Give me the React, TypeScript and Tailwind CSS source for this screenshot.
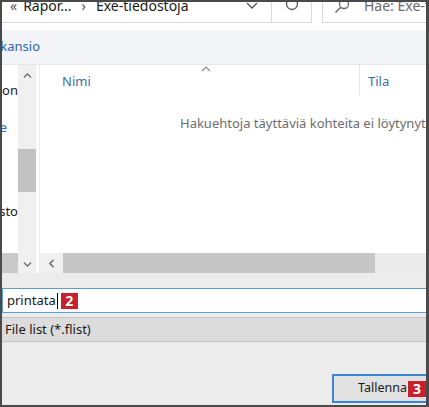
import { ChevronDown, ChevronLeft, ChevronUp } from "lucide-react";

const font = { fontFamily: '"Segoe UI", "Noto Sans", "Liberation Sans", sans-serif' };

function Badge({ label, className }: { label: string; className?: string }) {
  return (
    <span
      className={`flex items-center justify-center bg-[#c9202e] text-[14px] font-bold leading-none text-white ${className ?? ""}`}
    >
      {label}
    </span>
  );
}

function AddressBar() {
  return (
    <div className="flex h-[21px] shrink-0 bg-white">
      <div className="flex w-[310px] shrink-0 items-start whitespace-nowrap border-b border-r border-[#d9d9d9] text-[14px] leading-none text-[#1a1a1a]">
        <span className="-mt-[3px] ml-[8px] text-[#555]">«</span>
        <span className="-mt-[3px] ml-[6px]">Rapor...</span>
        <span className="-mt-[3px] ml-[10px] text-[#555]">›</span>
        <span className="-mt-[3px] ml-[10px]">Exe-tiedostoja</span>
        <div className="ml-auto flex h-full w-[40px] items-start justify-center border-r border-[#d9d9d9]">
          <svg width="14" height="10" viewBox="0 0 14 10" className="-mt-[1px]">
            <path d="M2 2 L7 7 L12 2" fill="none" stroke="#555" strokeWidth="1.3" />
          </svg>
        </div>
        <div className="flex h-full w-[39px] items-start justify-center">
          <svg width="16" height="14" viewBox="0 0 16 14" className="-mt-[4px]">
            <circle cx="8" cy="6" r="5.5" fill="none" stroke="#555" strokeWidth="1.3" />
          </svg>
        </div>
      </div>
      <div className="w-[10px] shrink-0" />
      <div className="flex min-w-0 flex-1 items-start overflow-hidden whitespace-nowrap border-b border-l border-[#d9d9d9] text-[14px] leading-none">
        <svg width="16" height="14" viewBox="0 0 16 14" className="-mt-[3px] ml-[11px] shrink-0">
          <circle cx="10" cy="5" r="4.5" fill="none" stroke="#666" strokeWidth="1.3" />
          <path d="M6.8 8.2 L1.5 13.5" stroke="#666" strokeWidth="1.4" />
        </svg>
        <span className="-mt-[3px] ml-[14px] text-[#6b6b6b]">Hae: Exe-tiedostoja</span>
      </div>
    </div>
  );
}

function NavPane() {
  return (
    <div className="flex w-[16px] shrink-0 flex-col overflow-hidden bg-white text-[13px] text-[#1a1a1a]">
      <div className="mt-[17px] flex h-[18px] items-center justify-end whitespace-nowrap">Julkaisusijainti Jon</div>
      <div className="mt-[19px] flex h-[18px] items-center justify-end whitespace-nowrap pr-[11px] text-[#2768b0]">Verkkosijainte</div>
      <div className="mt-[66px] flex h-[18px] items-center justify-end whitespace-nowrap">Paikallinen levy Lasto</div>
      <div className="mt-auto h-[20px] bg-[#c9c9c9]" />
    </div>
  );
}

function NavScrollbar() {
  return (
    <div className="flex w-[18px] shrink-0 flex-col items-center bg-[#f0f0f0]">
      <ChevronUp size={13} strokeWidth={2.4} className="mt-[4px] text-[#5f5f5f]" />
      <div className="mt-[67px] h-[43px] w-full bg-[#c2c2c2]" />
      <ChevronDown size={13} strokeWidth={2.4} className="mt-auto mb-[2px] text-[#5f5f5f]" />
    </div>
  );
}

function FileList() {
  return (
    <div className="flex flex-1 flex-col bg-white">
      <div className="relative flex h-[34px] shrink-0 text-[13px] text-[#3d6f9e]">
        <div className="flex w-[319px] items-center pl-[22px]">Nimi</div>
        <svg width="10" height="6" viewBox="0 0 10 6" className="absolute left-[161px] top-[1px]">
          <path d="M1 5 L5 1 L9 5" fill="none" stroke="#8a8a8a" strokeWidth="1.2" />
        </svg>
        <div className="h-[30px] w-px bg-[#e5e5e5]" />
        <div className="flex items-center pl-[8px]">Tila</div>
      </div>
      <div className="mt-[16px] flex h-[18px] items-center whitespace-nowrap pl-[140px] text-[13px] text-[#6d6d6d]">
        Hakuehtoja täyttäviä kohteita ei löytynyt.
      </div>
      <div className="mt-auto flex h-[20px] bg-[#ebebeb]">
        <div className="flex w-[23px] items-center justify-center bg-[#f0f0f0]">
          <ChevronLeft size={13} strokeWidth={2.4} className="text-[#5f5f5f]" />
        </div>
        <div className="w-[312px] bg-[#c6c6c6]" />
      </div>
    </div>
  );
}

export default function App() {
  return (
    <div
      className="h-[407px] w-[429px] border-b-2 border-l-2 border-r-[3px] border-t-2 border-[#4a4a4a] bg-[#ececec]"
      style={font}
    >
      <div className="flex h-full w-full flex-col overflow-hidden">
        <AddressBar />
        <div className="h-[7px] shrink-0 bg-white" />
        <div className="flex h-[35px] shrink-0 items-center border-b border-[#e6e6e6] bg-[#f2f4f7] text-[13px] text-[#2768b0]">
          <span className="-ml-[5px] whitespace-nowrap">ikansio</span>
        </div>
        <div className="flex h-[208px] shrink-0">
          <NavPane />
          <NavScrollbar />
          <div className="w-[4px] shrink-0 border-r border-[#ececec] bg-white" />
          <FileList />
        </div>
        <div className="h-[15px] shrink-0" />
        <div className="flex h-[25px] shrink-0 items-center border border-r-0 border-[#5a9fd6] bg-white text-[13px] text-[#1a1a1a]">
          <span className="ml-[4px]">printata</span>
          <span className="ml-[1px] h-[16px] w-px bg-black" />
          <Badge label="2" className="ml-[3px] h-[16px] w-[17px]" />
        </div>
        <div className="h-[4px] shrink-0" />
        <div className="flex h-[25px] shrink-0 items-center border-t border-b border-[#c4c4c4] bg-[#dcdcdc] text-[13px] text-[#1a1a1a]">
          <span className="ml-[3px]">File list (*.flist)</span>
        </div>
        <div className="flex flex-1 justify-end">
          <div className="mt-[32px] mb-[2px] flex h-[29px] w-[94px] items-center border-2 border-r-0 border-[#3a86d4] bg-[#e1e1e1] text-[12.5px] text-[#1a1a1a]">
            <span className="ml-[24px]">Tallenna</span>
            <Badge label="3" className="ml-auto h-[16px] w-[18px]" />
          </div>
        </div>
      </div>
    </div>
  );
}
